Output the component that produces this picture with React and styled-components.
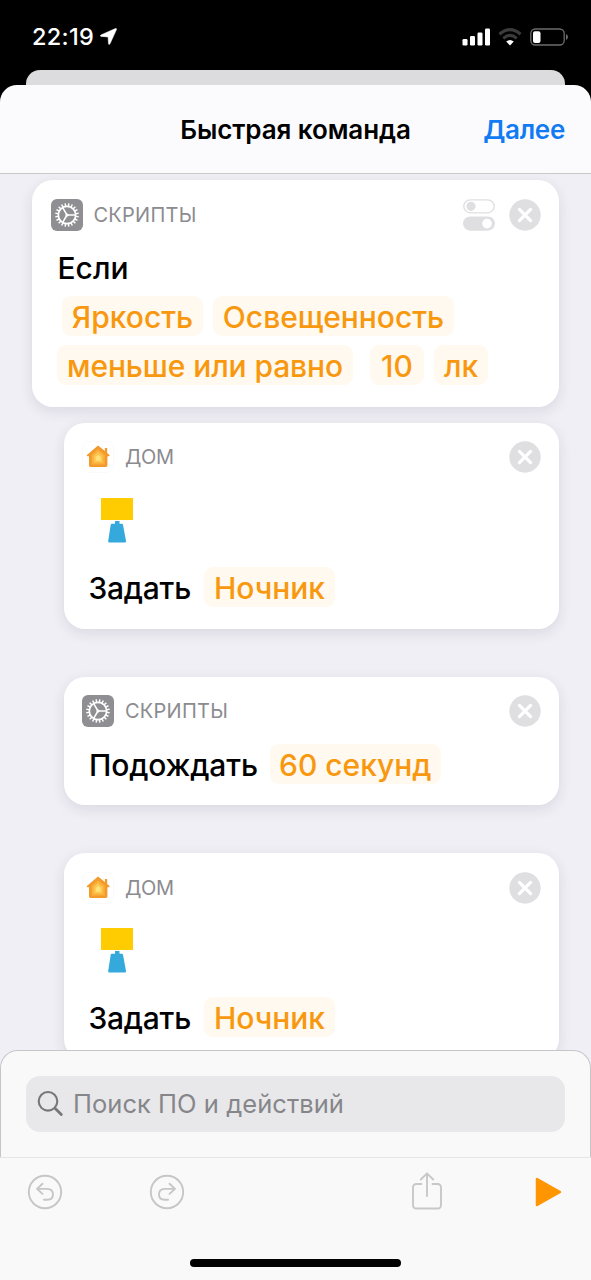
import React from "react";
import styled, { createGlobalStyle } from "styled-components";

const Global = createGlobalStyle`
  * { box-sizing: border-box; }
  body { margin: 0; background: #000; }
`;

const Phone = styled.div`
  width: 591px;
  height: 1280px;
  display: flex;
  flex-direction: column;
  overflow: hidden;
  background: #000;
  font-family: Inter, "Liberation Sans", sans-serif;
`;

const StatusBar = styled.div`
  height: 70px;
  flex: none;
  display: flex;
  align-items: center;
  padding: 3px 22px 0 32px;
  color: #fff;
`;

const Time = styled.span`
  font-size: 23.5px;
  font-weight: 500;
  line-height: 28px;
  letter-spacing: 0.3px;
  margin-right: auto;
  display: flex;
  align-items: center;
  gap: 6px;
`;

const StatusIcons = styled.div`
  display: flex;
  align-items: center;
  gap: 8px;
`;

const BackSheet = styled.div`
  height: 15px;
  flex: none;
  margin: 0 26px;
  border-radius: 14px 14px 0 0;
  background: #dcdcde;
`;

const Header = styled.header`
  height: 89px;
  flex: none;
  display: grid;
  grid-template-columns: 1fr auto 1fr;
  align-items: center;
  padding: 1px 26px 0;
  border-radius: 17px 17px 0 0;
  background: #fbfbfd;
  border-bottom: 1px solid #c9c9cc;
`;

const Title = styled.h1`
  grid-column: 2;
  margin: 0;
  font-size: 26px;
  font-weight: 600;
  line-height: 30px;
  letter-spacing: -0.08px;
`;

const Next = styled.button`
  justify-self: end;
  border: 0;
  padding: 0;
  background: none;
  font: 600 26px/30px Inter, sans-serif;
  letter-spacing: -0.3px;
  color: #127bf3;
`;

const Actions = styled.main`
  flex: 1;
  min-height: 0;
  overflow: hidden;
  display: flex;
  flex-direction: column;
  padding: 6px 32px 0;
  margin-bottom: -20px;
  background: #f0eff5;
`;

const Card = styled.section`
  flex: none;
  height: ${(p) => p.$height}px;
  margin-left: ${(p) => (p.$nested ? 31.5 : 0)}px;
  margin-bottom: ${(p) => p.$after}px;
  padding: 18px 18.5px 0;
  border-radius: 21px;
  background: #fff;
  box-shadow: 0 4px 14px rgba(40, 40, 70, 0.11);
`;

const CardHead = styled.div`
  height: 33px;
  display: flex;
  align-items: center;
`;

const AppName = styled.span`
  margin: 0 auto 0 11px;
  font-size: 20px;
  line-height: 24px;
  letter-spacing: ${(p) => p.$track}px;
  color: #8b8b90;
`;

const Controls = styled.div`
  display: flex;
  gap: 14px;
`;

const Line = styled.div`
  display: flex;
  align-items: center;
  height: 40px;
  margin: ${(p) => p.$top}px 0 0 ${(p) => p.$indent}px;
`;

const Phrase = styled.span`
  height: 40px;
  font-size: 30px;
  font-weight: 500;
  line-height: 42px;
  letter-spacing: ${(p) => p.$track || 0}px;
  white-space: nowrap;
`;

const Token = styled(Phrase)`
  width: ${(p) => p.$width}px;
  flex: none;
  text-align: center;
  margin-left: ${(p) => p.$gap || 0}px;
  border-radius: 9px;
  background: #fff9ef;
  color: #f8980f;
`;

const LampBox = styled.div`
  height: 46px;
  margin: 24px 0 0 18.5px;
`;

const Drawer = styled.div`
  position: relative;
  z-index: 1;
  flex: none;
  height: 107px;
  padding: 25px 25px 0;
  border: 1px solid #c6c6c9;
  border-bottom: 0;
  border-radius: 18px 18px 0 0;
  background: #f9f9f9;
`;

const Search = styled.div`
  height: 56px;
  display: flex;
  align-items: center;
  gap: 9px;
  padding: 0 11px;
  border-radius: 14px;
  background: #e8e8ea;
  color: #86868a;
  font-size: 25.5px;
  line-height: 30px;
  letter-spacing: 0.04px;
`;

const Toolbar = styled.footer`
  height: 123px;
  flex: none;
  display: flex;
  flex-direction: column;
  justify-content: space-between;
  align-items: center;
  padding-bottom: 13px;
  border-top: 1px solid #e6e6e7;
  background: #f9f9f9;
`;

const Tools = styled.div`
  width: 100%;
  height: 68px;
  display: flex;
  align-items: center;
  justify-content: space-between;
  padding: 0 29px 0 27px;
`;

const ToolGroup = styled.div`
  display: flex;
  align-items: center;
  gap: ${(p) => p.$gap}px;
`;

const HomeBar = styled.div`
  width: 211px;
  height: 8px;
  border-radius: 4px;
  background: #000;
`;

const teeth = Array.from({ length: 20 }, (_, i) => i * 18);

const GearIcon = () => (
  <svg width="32" height="32" viewBox="0 0 32 32">
    <rect width="32" height="32" rx="6" fill="#8e8e93" />
    <g stroke="#fff" fill="none">
      <circle cx="16" cy="16" r="8.7" strokeWidth="1.7" />
      {teeth.map((a) => (
        <path key={a} d="M16 4.2v3" strokeWidth="1.5" transform={`rotate(${a + 9} 16 16)`} />
      ))}
      <path d="M16 16h8.5M16 16l-4.3-7.4M16 16l-4.3 7.4" strokeWidth="1.5" />
    </g>
    <circle cx="16" cy="16" r="1.6" fill="#fff" />
  </svg>
);

const HouseIcon = () => (
  <svg width="32" height="32" viewBox="0 0 32 32">
    <rect x=".5" y=".5" width="31" height="31" rx="6.5" fill="#fff" stroke="#fafafa" />
    <path d="M16 4.6 4.6 14.2l.8 1H7V24.4q0 1.6 1.6 1.6h15.2q1.6 0 1.6-1.6V15.2h1.6l.8-1-2.6-2.2V7H22.900v2.900z" fill="#f39a2c" />
    <path d="M16 8.300 9.700 13.700v9.700h13V13.700z" fill="#fbb03c" />
    <path d="M16 11 11.800 14.700v6.900h8.800v-6.900z" fill="#fdc751" />
    <path d="M16 13.800 13.800 16v3.800h4.800V16z" fill="#ffe27a" />
  </svg>
);

const LampIcon = () => (
  <svg width="32" height="45" viewBox="0 0 32 45">
    <rect width="32" height="22" fill="#ffcc02" />
    <path d="M14 23h4.500v2.700h2.300q1 0 1.200 1L25 43q.2 1.500-1.200 1.500H8.400Q7 44.500 7.200 43l2.500-16.300q.2-1 1.200-1H14z" fill="#35a8dc" />
  </svg>
);

const CloseIcon = () => (
  <svg width="32" height="32" viewBox="0 0 32 32">
    <circle cx="16" cy="16" r="15.700" fill="#dfdfe1" />
    <path d="m10.400 10.400 11.200 11.200M21.600 10.400 10.400 21.600" stroke="#fff" strokeWidth="3.200" strokeLinecap="round" />
  </svg>
);

const SwitchesIcon = () => (
  <svg width="32" height="32" viewBox="0 0 32 32">
    <rect x=".8" y=".8" width="30.400" height="13" rx="6.500" fill="#fff" stroke="#dfdfe1" strokeWidth="1.300" />
    <circle cx="8" cy="7.300" r="4.600" fill="#dfdfe1" />
    <rect y="17.500" width="32" height="14.200" rx="7.100" fill="#dfdfe1" />
    <circle cx="24" cy="24.600" r="4.800" fill="#fff" />
  </svg>
);

const LocationIcon = () => (
  <svg width="17" height="17" viewBox="0 0 16 16">
    <path d="M14.500.5.9 6.500q-1.500 1 .2 1.400l6.500.5.400 6.400q.4 1.500 1.400.1L15.500 1.500q.3-1.300-1-1z" fill="#fff" stroke="#fff" strokeWidth=".5" />
  </svg>
);

const SignalIcon = () => (
  <svg width="28" height="18" viewBox="0 0 28 18" fill="#fff">
    <rect x=".5" y="11" width="5" height="6.500" rx="1.300" />
    <rect x="8" y="8" width="5" height="9.500" rx="1.300" />
    <rect x="15.500" y="4.500" width="5" height="13" rx="1.300" />
    <rect x="23" y=".5" width="5" height="17" rx="1.300" />
  </svg>
);

const WifiIcon = () => (
  <svg width="24" height="18" viewBox="0 0 24 18" fill="none">
    <path d="M1.500 6.200q10.500-9 21 0" stroke="#3b3b3b" strokeWidth="3.200" />
    <path d="M5.300 10.300q6.700-5.800 13.400 0" stroke="#3b3b3b" strokeWidth="3" />
    <path d="M8.200 13.600q3.800-3.200 7.600 0L12 17.500z" fill="#fff" />
  </svg>
);

const BatteryIcon = () => (
  <svg width="39" height="18" viewBox="0 0 39 18">
    <rect x=".8" y="1" width="33.400" height="16" rx="4.500" fill="none" stroke="#6c6c6c" strokeWidth="1.300" />
    <rect x="3" y="3.200" width="7.500" height="11.800" rx="2" fill="#fff" />
    <path d="M36 6q2 .8 2 3t-2 3z" fill="#6c6c6c" />
  </svg>
);

const SearchIcon = () => (
  <svg width="27" height="28" viewBox="0 0 27 28" fill="none" stroke="#77777b" strokeWidth="2.100" strokeLinecap="round">
    <circle cx="11" cy="11.300" r="9.300" />
    <path d="m18 18.300 6.300 6.200" strokeWidth="2.800" />
  </svg>
);

const UndoIcon = ({ flip }) => (
  <svg width="36" height="36" viewBox="0 0 36 36" fill="none" stroke="#c6c6c7" strokeWidth="1.900" strokeLinecap="round" strokeLinejoin="round">
    <circle cx="18" cy="18" r="16.200" />
    <g transform={flip ? "matrix(-1 0 0 1 36 0)" : undefined}>
      <path d="M15.500 9.700 10 14.900l5.500 5M10.500 14.900h9.800q5.700.3 5.700 5.500T20.300 25.700H17" />
    </g>
  </svg>
);

const ShareIcon = () => (
  <svg width="32" height="40" viewBox="0 0 32 40" fill="none" stroke="#c8c8c9" strokeWidth="1.900" strokeLinecap="round" strokeLinejoin="round">
    <path d="M10.500 12H5.500q-3.500 0-3.500 3.500V33q0 3.500 3.500 3.500h21Q30 36.500 30 33V15.500q0-3.500-3.500-3.500h-5M16 24V1.500M9.800 7.500 16 1.300l6.200 6.200" />
  </svg>
);

const PlayIcon = () => (
  <svg width="27" height="30" viewBox="0 0 27 30">
    <path d="M2 2v26L25 15z" fill="#ff9500" stroke="#ff9500" strokeWidth="2.500" strokeLinejoin="round" />
  </svg>
);

const ScriptHead = ({ options }) => (
  <CardHead>
    <GearIcon />
    <AppName $track={0.25}>СКРИПТЫ</AppName>
    <Controls>
      {options && <SwitchesIcon />}
      <CloseIcon />
    </Controls>
  </CardHead>
);

const HomeAction = () => (
  <Card $nested $height={206.5} $after={47.5}>
    <CardHead>
      <HouseIcon />
      <AppName $track={-0.3}>ДОМ</AppName>
      <Controls>
        <CloseIcon />
      </Controls>
    </CardHead>
    <LampBox>
      <LampIcon />
    </LampBox>
    <Line $top={23} $indent={6.5}>
      <Phrase $track={-0.25}>Задать</Phrase>
      <Token $gap={13} $width={131}>Ночник</Token>
    </Line>
  </Card>
);

export default function App() {
  return (
    <Phone>
      <Global />
      <StatusBar>
        <Time>22:19<LocationIcon /></Time>
        <StatusIcons>
          <SignalIcon />
          <WifiIcon />
          <BatteryIcon />
        </StatusIcons>
      </StatusBar>
      <BackSheet />
      <Header>
        <Title>Быстрая команда</Title>
        <Next>Далее</Next>
      </Header>
      <Actions>
        <Card $height={226.5} $after={16}>
          <ScriptHead options />
          <Line $top={16} $indent={7}>
            <Phrase>Если</Phrase>
          </Line>
          <Line $top={9} $indent={11.5}>
            <Token $width={141}>Яркость</Token>
            <Token $gap={10} $width={241}>Освещенность</Token>
          </Line>
          <Line $top={9} $indent={6.5}>
            <Token $width={296} $track={-0.1}>меньше или равно</Token>
            <Token $gap={17} $width={54}>10</Token>
            <Token $gap={10} $width={54}>лк</Token>
          </Line>
        </Card>
        <HomeAction />
        <Card $nested $height={128.5} $after={48}>
          <ScriptHead />
          <Line $top={16} $indent={7}>
            <Phrase $track={-0.15}>Подождать</Phrase>
            <Token $gap={12} $width={171}>60 секунд</Token>
          </Line>
        </Card>
        <HomeAction />
      </Actions>
      <Drawer>
        <Search>
          <SearchIcon />
          Поиск ПО и действий
        </Search>
      </Drawer>
      <Toolbar>
        <Tools>
          <ToolGroup $gap={86}>
            <UndoIcon />
            <UndoIcon flip />
          </ToolGroup>
          <ToolGroup $gap={92}>
            <ShareIcon />
            <PlayIcon />
          </ToolGroup>
        </Tools>
        <HomeBar />
      </Toolbar>
    </Phone>
  );
}
